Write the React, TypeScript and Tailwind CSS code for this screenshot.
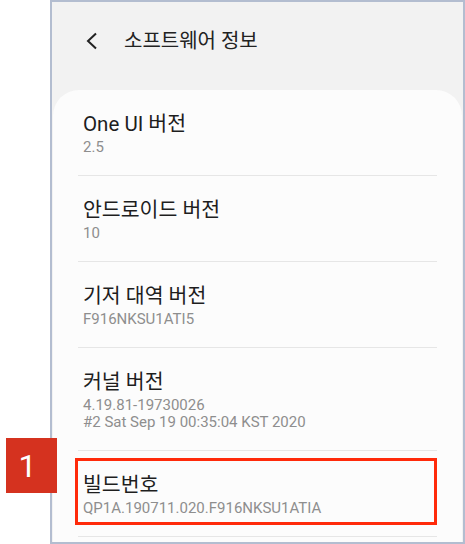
import React from 'react';

type Item = { title: string; lines: string[]; highlight?: boolean };

const items: Item[] = [
  { title: 'One UI 버전', lines: ['2.5'] },
  { title: '안드로이드 버전', lines: ['10'] },
  { title: '기저 대역 버전', lines: ['F916NKSU1ATI5'] },
  { title: '커널 버전', lines: ['4.19.81-19730026', '#2 Sat Sep 19 00:35:04 KST 2020'] },
  { title: '빌드번호', lines: ['QP1A.190711.020.F916NKSU1ATIA'], highlight: true },
];

const font = { fontFamily: 'Roboto, "Noto Sans CJK KR", sans-serif' };

const App: React.FC = () => {
  return (
    <div className="relative w-[465px] h-[544px] bg-white overflow-hidden" style={font}>
      <div className="ml-[50px] h-full border-2 border-[#b3bdd0] bg-[#f2f2f2] flex flex-col">
        {/* header */}
        <div className="h-[88px] flex items-center pl-[33px] pb-[10px] shrink-0">
          <svg width="14" height="18" viewBox="0 0 14 18" className="text-[#222]">
            <polyline points="11,1.5 3,9 11,16.5" fill="none" stroke="currentColor" strokeWidth="2" />
          </svg>
          <span className="ml-[25px] text-[20px] text-[#222] leading-none">소프트웨어 정보</span>
        </div>

        {/* list card */}
        <div className="flex-1 mx-px rounded-t-[26px] bg-[#fcfcfc] px-[25px]">
          {items.map((item) => (
            <div key={item.title} className="relative border-b border-[#e6e6e6] pl-[5px] pt-[20px] pb-[19px]">
              <div className="text-[20.5px] leading-[29px] text-[#1e1e1e]">{item.title}</div>
              {item.lines.map((line) => (
                <div key={line} className="text-[15px] leading-[17px] text-[#8e8e8e]">
                  {line}
                </div>
              ))}
              {item.highlight && (
                <div className="absolute left-[-3px] right-0 top-[7px] bottom-[11px] border-[3px] border-[#ff2a0a]" />
              )}
            </div>
          ))}
        </div>
      </div>

      {/* step badge */}
      <div className="absolute left-[6px] top-[438px] w-[51px] h-[55px] bg-[#d5321f] flex items-center justify-center">
        <span className="text-white text-[32px] leading-none pr-[8px]">1</span>
      </div>
    </div>
  );
};

export default App;
